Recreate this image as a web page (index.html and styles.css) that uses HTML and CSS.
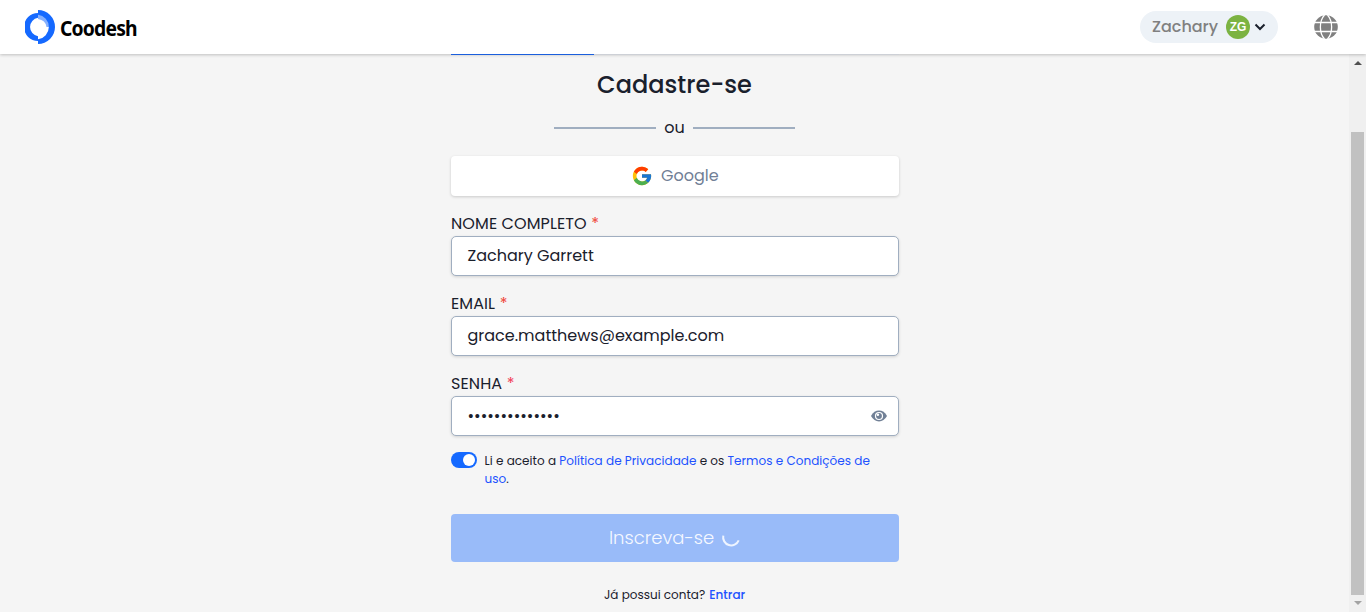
FILE: index.html
```html
<!DOCTYPE html>
<html lang="pt-BR">
<head>
<meta charset="utf-8">
<title>Coodesh</title>
<link rel="stylesheet" href="styles.css">
</head>
<body>
<header class="topbar">
  <div class="brand">
    <svg class="brand-mark" width="30" height="34" viewBox="0 0 30 34">
      <path d="M13 3A14 14 0 0 0 13 31V26.200A9.300 9.300 0 0 1 13 7.800Z" fill="#1569ff"/>
      <path d="M13 4.300A12.700 12.700 0 0 1 25 17H21.500Q20.600 10 13 9Z" fill="#85b0ff"/>
      <path d="M13 0A17 17 0 0 1 13 34V29.300A12.400 12.400 0 0 0 13 4.700Z" fill="#1569ff"/>
    </svg>
    <span class="brand-name">Coodesh</span>
  </div>
  <div class="user">
    <span class="user-name">Zachary</span>
    <span class="avatar">ZG</span>
    <svg width="12" height="8" viewBox="0 0 12 8"><path d="M1.500 1.500L6 6L10.500 1.500" fill="none" stroke="#1a202c" stroke-width="2"/></svg>
  </div>
  <svg class="globe" width="24" height="24" viewBox="0 0 24 24">
    <circle cx="12" cy="12" r="11.800" fill="#808080"/>
    <path d="M0 7.500H24M0 16.500H24M10.500 0C5 6 5 18 10.500 24M13.500 0C19 6 19 18 13.500 24" fill="none" stroke="#fff" stroke-width="1.300"/>
  </svg>
</header>
<div class="viewport">
  <main class="page">
    <div class="progress"><div class="progress-value"></div></div>
    <h1 class="title"><span>Cadastre-se</span></h1>
    <div class="divider"><span class="rule"></span><span class="or">ou</span><span class="rule"></span></div>
    <button class="google">
      <svg width="22" height="22" viewBox="0 0 48 48">
        <path fill="#FFC107" d="M43.611 20.083H42V20H24v8h11.303c-1.649 4.657-6.080 8-11.303 8-6.627 0-12-5.373-12-12s5.373-12 12-12c3.059 0 5.842 1.154 7.961 3.039l5.657-5.657C34.046 6.053 29.268 4 24 4 12.955 4 4 12.955 4 24s8.955 20 20 20 20-8.955 20-20c0-1.341-.138-2.650-.389-3.917z"/>
        <path fill="#FF3D00" d="M6.306 14.691l6.571 4.819C14.655 15.108 18.961 12 24 12c3.059 0 5.842 1.154 7.961 3.039l5.657-5.657C34.046 6.053 29.268 4 24 4 16.318 4 9.656 8.337 6.306 14.691z"/>
        <path fill="#4CAF50" d="M24 44c5.166 0 9.860-1.977 13.409-5.192l-6.190-5.238C29.211 35.091 26.715 36 24 36c-5.202 0-9.619-3.317-11.283-7.946l-6.522 5.025C9.505 39.556 16.227 44 24 44z"/>
        <path fill="#1976D2" d="M43.611 20.083H42V20H24v8h11.303c-.792 2.237-2.231 4.166-4.087 5.571l6.193 5.238C36.971 39.205 44 34 44 24c0-1.341-.138-2.650-.389-3.917z"/>
      </svg>
      <span class="google-text">Google</span>
    </button>
    <div class="label"><span>NOME COMPLETO</span><i>*</i></div>
    <div class="field"><span>Zachary Garrett</span></div>
    <div class="label"><span>EMAIL</span><i>*</i></div>
    <div class="field"><span>grace.matthews@example.com</span></div>
    <div class="label"><span>SENHA</span><i class="rose">*</i></div>
    <div class="field"><span>••••••••••••••</span>
      <svg width="16" height="12" viewBox="0 0 16 12">
        <path d="M0 6Q3 .6 8 .6T16 6Q13 11.400 8 11.400T0 6Z" fill="#718096"/>
        <circle cx="8" cy="6" r="4.100" fill="#fff"/>
        <circle cx="8" cy="6" r="2.900" fill="#718096"/>
        <circle cx="6.900" cy="4.800" r="1.250" fill="#fff"/>
      </svg>
    </div>
    <div class="terms">
      <span class="switch"><span class="knob"></span></span>
      <p class="terms-text">Li e aceito a <a>Política de Privacidade</a> e os <a>Termos e Condições de</a><br><a>uso</a>.</p>
    </div>
    <button class="submit"><span>Inscreva-se</span>
      <svg width="20" height="20" viewBox="0 0 20 20"><path d="M2.300 7.600A8.100 8.100 0 0 0 17.700 12.400" fill="none" stroke="#eef4ff" stroke-width="2"/></svg>
    </button>
    <p class="login"><span>Já possui conta?</span><a>Entrar</a></p>
  </main>
  <div class="scrollbar">
    <svg width="8" height="4" viewBox="0 0 8 4"><path d="M0 4L4 0L8 4Z" fill="#505050"/></svg>
    <div class="track"><div class="thumb"></div></div>
    <svg width="8" height="4" viewBox="0 0 8 4"><path d="M0 0L4 4L8 0Z" fill="#a3a3a3"/></svg>
  </div>
</div>
</body>
</html>
```
FILE: styles.css
```css
* { box-sizing: border-box; }
body { margin: 0; height: 612px; overflow: hidden; background: #f5f5f5; color: #1a202c; font-family: Poppins, Inter, sans-serif; font-size: 16px; line-height: 24px; display: flex; flex-direction: column; }
svg { display: block; flex: none; }
span, a { white-space: nowrap; }
button { border: 0; padding: 0; font: inherit; }
a { color: #2152ff; }
.topbar { height: 54px; flex: none; background: #fff; box-shadow: 0 1px 3px rgba(0,0,0,.22); display: flex; align-items: center; padding: 0 28px 0 25px; z-index: 1; }
.brand { display: flex; align-items: center; gap: 5px; flex: 1; }
.brand-name { font: 700 21px/28px "Noto Sans", sans-serif; color: #000; padding-top: 1px; transform: scaleX(.92); transform-origin: left; letter-spacing: -0.9px; }
.user { width: 138px; height: 32px; border-radius: 16px; background: #edf2f7; display: flex; align-items: center; padding-left: 12px; margin-right: 36px; }
.user-name { width: 74px; font-weight: 500; color: #808080; }
.avatar { width: 24px; height: 24px; border-radius: 50%; background: #7cb342; color: #fff; font: 700 12px/24px "Liberation Sans", sans-serif; text-align: center; margin-right: 4px; }
.viewport { flex: 1; display: flex; min-height: 0; }
.page { width: 448px; margin: 0 450px 0 451px; display: flex; flex-direction: column; flex: none; }
.progress { height: 1px; background: #cdd0d6; position: relative; z-index: 2; }
.progress-value { width: 143px; height: 1px; background: #1b5fdd; }
.title { margin: 12px 0 0; font-size: 24px; line-height: 36px; font-weight: 500; text-align: center; }
.title span { margin-left: -1px; }
.divider { height: 24px; margin-top: 13px; display: flex; align-items: center; padding-left: 103px; }
.rule { width: 102px; height: 2px; background: #a0aec0; }
.or { width: 37px; text-align: center; }
.google { height: 40px; margin-top: 16px; background: #fff; border-radius: 4px; box-shadow: 0 1px 3px rgba(0,0,0,.18); display: flex; align-items: center; padding-left: 180px; gap: 8px; color: #718096; }
.label { height: 24px; margin-top: 16px; display: flex; gap: 4.5px; letter-spacing: 0.1px; }
.label i { font-style: normal; color: #f04438; }
.label .rose { color: #f23b57; }
.field { height: 40px; border: 1px solid #a0aec0; border-radius: 5px; background: #fff; box-shadow: 0 1px 3px rgba(0,0,0,.15); padding: 0 11px 0 15.5px; display: flex; align-items: center; justify-content: space-between; }
.terms { display: flex; margin-top: 16px; height: 36px; font-size: 12px; line-height: 18px; letter-spacing: 0.03px; }
.switch { width: 26px; height: 16px; border-radius: 8px; background: #1569ff; padding: 2px; margin-right: 7.5px; display: flex; justify-content: flex-end; }
.knob { width: 12px; height: 12px; border-radius: 50%; background: #fff; }
.terms-text { margin: 0; }
.submit { height: 48px; margin-top: 26px; background: #99bbf9; border-radius: 4px; color: #f5f8ff; font-size: 18px; font-weight: 300; display: flex; align-items: center; padding-left: 158px; gap: 7px; }
.login { margin: 24px 0 0; font-size: 12px; line-height: 18px; display: flex; padding-left: 153px; gap: 4px; }
.login a { font-weight: 500; }
.scrollbar { width: 17px; background: #f0f0f0; display: flex; flex-direction: column; align-items: center; padding: 7px 0; }
.track { flex: 1; width: 13px; padding-top: 67px; }
.thumb { width: 13px; height: 463px; background: #c1c1c1; }
```
